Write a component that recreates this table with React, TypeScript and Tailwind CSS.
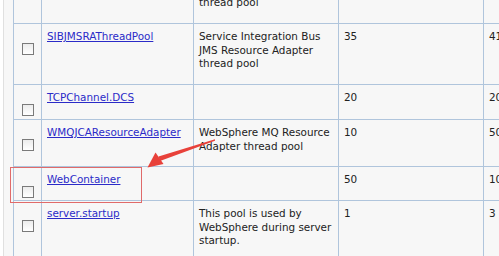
import React from 'react';

type Row = {
    name: string;
    desc: string[];
    min: string;
    max: string;
    h: string;
};

const rows: Row[] = [
    {
        name: 'SIBFAPThreadPool',
        desc: ['Service Integration Bus', 'FAP Outbound channel', 'thread pool'],
        min: '4',
        max: '50',
        h: 'h-[61px]',
    },
    {
        name: 'SIBJMSRAThreadPool',
        desc: ['Service Integration Bus', 'JMS Resource Adapter', 'thread pool'],
        min: '35',
        max: '41',
        h: 'h-[61px]',
    },
    { name: 'TCPChannel.DCS', desc: [], min: '20', max: '20', h: 'h-[35px]' },
    {
        name: 'WMQJCAResourceAdapter',
        desc: ['WebSphere MQ Resource', 'Adapter thread pool'],
        min: '10',
        max: '50',
        h: 'h-[47px]',
    },
    { name: 'WebContainer', desc: [], min: '50', max: '100', h: 'h-[34px]' },
    {
        name: 'server.startup',
        desc: ['This pool is used by', 'WebSphere during server', 'startup.'],
        min: '1',
        max: '3',
        h: 'h-[61px]',
    },
];

function CheckBox() {
    return (
        <div className="mt-[14px] ml-[3px] w-[12px] h-[12px] border border-[#7a7a7a] bg-gradient-to-b from-[#ececec] to-white" />
    );
}

export default function App() {
    const cell = 'border border-[#b0c5dc] align-top p-0';

    return (
        <div
            className="relative flex h-[256px] w-[499px] overflow-hidden bg-white text-[10.4px] leading-[13.5px] text-[#222]"
            style={{ fontFamily: '"DejaVu Sans", Verdana, sans-serif' }}
        >
            <div className="w-[3px] shrink-0 bg-white" />
            <div className="w-px shrink-0 bg-[#e0e0e0]" />
            <div className="flex-1 bg-[#f7f7f7] pl-[9px]">
                <table className="-mt-[38px] border-collapse table-fixed w-[560px]">
                    <colgroup>
                        <col className="w-[28px]" />
                        <col className="w-[152px]" />
                        <col className="w-[145px]" />
                        <col className="w-[145px]" />
                        <col className="w-[90px]" />
                    </colgroup>
                    <tbody>
                        {rows.map((r) => (
                            <tr key={r.name} className={r.h}>
                                <td className={`${cell} pl-[5px] pt-[5px]`}>
                                    <CheckBox />
                                </td>
                                <td className={`${cell} pl-[5px] pt-[6px]`}>
                                    <a href="#" className="text-[#2b2bc8] underline whitespace-nowrap">
                                        {r.name}
                                    </a>
                                </td>
                                <td className={`${cell} pl-[5px] pt-[6px] whitespace-nowrap`}>
                                    {r.desc.map((d, i) => (
                                        <div key={i}>{d}</div>
                                    ))}
                                </td>
                                <td className={`${cell} pl-[5px] pt-[6px]`}>{r.min}</td>
                                <td className={`${cell} pl-[5px] pt-[6px]`}>{r.max}</td>
                            </tr>
                        ))}
                    </tbody>
                </table>
            </div>

            {/* annotation */}
            <div className="absolute left-[10px] top-[167px] w-[132px] h-[36px] border border-[#e06a6a]" />
            <svg className="absolute left-0 top-0" width="499" height="256" viewBox="0 0 499 256">
                <polygon points="215,139.2 215,140.8 160,161 158.5,156.5" fill="#e8413a" />
                <polygon points="147.5,167.5 155.5,152.5 163.5,164" fill="#e8413a" />
            </svg>
        </div>
    );
}
